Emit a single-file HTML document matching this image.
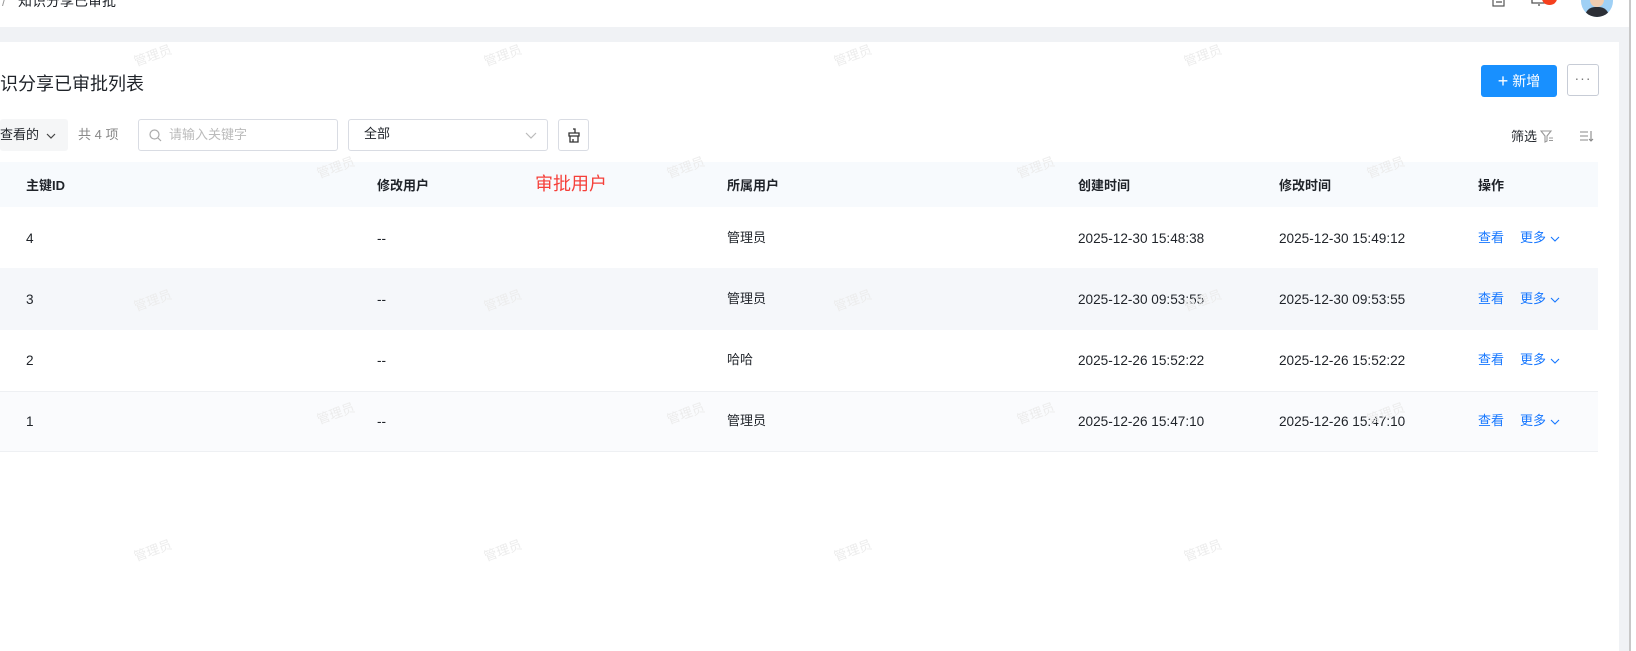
<!DOCTYPE html>
<html><head><meta charset="utf-8"><style>
*{margin:0;padding:0;box-sizing:border-box}
body{width:1636px;height:651px;overflow:hidden;background:#fff;font-family:"Liberation Sans","Noto Sans CJK SC",sans-serif;font-size:13px;color:#1f2329;position:relative}
.a{position:absolute;line-height:20px;white-space:nowrap}
.wm{position:absolute;color:#ececec;font-size:13px;transform:rotate(-20deg);white-space:nowrap}
.th{font-weight:bold;color:#1f2329}
.link{color:#1677ff}
.d{font-size:13.6px}
.chev{display:inline-block;vertical-align:middle;margin-left:4px}
</style></head><body>
<div class="a" style="left:0;top:0;width:1636px;height:27px;background:#fff"></div>
<div class="a" style="left:2px;top:-8px;color:#999;font-size:13px">/</div>
<div class="a" style="left:18px;top:-9px;font-size:14px;color:#1f2329">知识分享已审批</div>
<svg class="a" style="left:1491px;top:-6px" width="16" height="14" viewBox="0 0 16 14"><rect x="2" y="0" width="11" height="12" fill="none" stroke="#555" stroke-width="1.2"/><path d="M5 5h6M5 8h6" stroke="#555" stroke-width="1.2"/></svg>
<svg class="a" style="left:1529px;top:-6px" width="20" height="16" viewBox="0 0 20 16"><path d="M3 0v9h14" fill="none" stroke="#555" stroke-width="1.3"/><path d="M9 11h2" stroke="#555" stroke-width="1.3"/></svg>
<div class="a" style="left:1542px;top:-8px;width:15px;height:13px;border-radius:50%;background:#f5401e"></div>
<div class="a" style="left:1581px;top:-15px;width:32px;height:32px;border-radius:50%;background:#9fd0f5;overflow:hidden"><div style="position:absolute;left:9px;top:4px;width:14px;height:18px;border-radius:7px;background:#f1cdb0"></div><div style="position:absolute;left:4px;top:22px;width:24px;height:14px;border-radius:10px 10px 0 0;background:#2c2f36"></div></div>
<div class="a" style="left:0;top:27px;width:1636px;height:15px;background:#f0f2f5"></div>
<div class="a" style="left:1619px;top:27px;width:11px;height:624px;background:#f0f2f5"></div>
<div class="a" style="left:1629px;top:0;width:2px;height:651px;background:#c8c8c8"></div>
<div class="a" style="left:1631px;top:0;width:5px;height:651px;background:#fff"></div>
<div class="a" style="left:0;top:72px;font-size:18px;line-height:24px;color:#1f2329">识分享已审批列表</div>
<div class="a" style="left:1481px;top:65px;width:76px;height:32px;background:#1890ff;border-radius:3px;color:#fff;font-size:14px;line-height:32px;text-align:center"><span style="font-size:18px;vertical-align:-1px">+</span> 新增</div>
<div class="a" style="left:1567px;top:64px;width:32px;height:32px;border:1px solid #c7ccd6;border-radius:3px;color:#777;text-align:center;line-height:26px;font-size:14px;letter-spacing:1px">···</div>
<div class="a" style="left:0;top:119px;width:68px;height:32px;background:#f5f6f7;border-radius:3px;font-size:13px;line-height:32px">查看的<svg style="position:absolute;left:46px;top:14px" width="10" height="6" viewBox="0 0 10 6"><path d="M1 1l4 4 4-4" fill="none" stroke="#444" stroke-width="1.2"/></svg></div>
<div class="a" style="left:78px;top:125px;color:#888">共 4 项</div>
<div class="a" style="left:138px;top:119px;width:200px;height:32px;border:1px solid #d9dce3;border-radius:3px"><svg style="position:absolute;left:10px;top:9px" width="13" height="13" viewBox="0 0 13 13"><circle cx="5.5" cy="5.5" r="4.5" fill="none" stroke="#aaa" stroke-width="1.2"/><path d="M9 9l3 3" stroke="#aaa" stroke-width="1.2"/></svg><span style="position:absolute;left:30px;top:5px;color:#bbb">请输入关键字</span></div>
<div class="a" style="left:348px;top:119px;width:200px;height:32px;border:1px solid #d9dce3;border-radius:3px"><span style="position:absolute;left:15px;top:4px">全部</span><svg style="position:absolute;right:10px;top:12px" width="12" height="8" viewBox="0 0 12 8"><path d="M1 1l5 5 5-5" fill="none" stroke="#bbb" stroke-width="1.2"/></svg></div>
<div class="a" style="left:558px;top:119px;width:31px;height:32px;border:1px solid #d9dce3;border-radius:3px"><svg style="position:absolute;left:8px;top:8px" width="14" height="15" viewBox="0 0 14 15"><path d="M6 1h2v4M2 5h10v3H2zM3 8v6h8V8M6 14v-3" fill="none" stroke="#333" stroke-width="1.3"/></svg></div>
<div class="a" style="left:1511px;top:127px;font-size:13px">筛选</div>
<svg class="a" style="left:1540px;top:130px" width="14" height="13" viewBox="0 0 14 13"><path d="M1 1h10L7 6v5L5 12V6z" fill="none" stroke="#999" stroke-width="1.1"/><path d="M9 8h4M9 10.5h4" stroke="#999"/></svg>
<svg class="a" style="left:1580px;top:131px" width="14" height="11" viewBox="0 0 14 11"><path d="M0 1h8M0 5h8M0 9h8M11 0v10M9 8l2 2 2-2" fill="none" stroke="#888" stroke-width="1.1"/></svg>
<div class="a" style="left:0;top:162px;width:1598px;height:45px;background:#f7fafd"></div>
<div class="a" style="left:0;top:268px;width:1598px;height:62px;background:#f5f7fa"></div>
<div class="a" style="left:0;top:391px;width:1598px;height:61px;background:#fafbfd;border-top:1px solid #eef0f3;border-bottom:1px solid #eef0f3"></div>
<div class="a th" style="left:26px;top:176px">主键ID</div>
<div class="a th" style="left:377px;top:176px">修改用户</div>
<div class="a" style="left:535px;top:172px;color:#f5403a;font-size:18px;line-height:24px">审批用户</div>
<div class="a th" style="left:727px;top:176px">所属用户</div>
<div class="a th" style="left:1078px;top:176px">创建时间</div>
<div class="a th" style="left:1279px;top:176px">修改时间</div>
<div class="a th" style="left:1478px;top:176px">操作</div>

<div class="a d" style="left:26px;top:229px">4</div><div class="a d" style="left:377px;top:229px">--</div><div class="a" style="left:727px;top:228px">管理员</div><div class="a d" style="left:1078px;top:229px">2025-12-30 15:48:38</div><div class="a d" style="left:1279px;top:229px">2025-12-30 15:49:12</div><div class="a link" style="left:1478px;top:228px">查看</div><div class="a link" style="left:1520px;top:228px">更多<svg class="chev" width="10" height="6" viewBox="0 0 10 6"><path d="M1 1l4 4 4-4" fill="none" stroke="#1677ff" stroke-width="1.1"/></svg></div>
<div class="a d" style="left:26px;top:290px">3</div><div class="a d" style="left:377px;top:290px">--</div><div class="a" style="left:727px;top:289px">管理员</div><div class="a d" style="left:1078px;top:290px">2025-12-30 09:53:55</div><div class="a d" style="left:1279px;top:290px">2025-12-30 09:53:55</div><div class="a link" style="left:1478px;top:289px">查看</div><div class="a link" style="left:1520px;top:289px">更多<svg class="chev" width="10" height="6" viewBox="0 0 10 6"><path d="M1 1l4 4 4-4" fill="none" stroke="#1677ff" stroke-width="1.1"/></svg></div>
<div class="a d" style="left:26px;top:351px">2</div><div class="a d" style="left:377px;top:351px">--</div><div class="a" style="left:727px;top:350px">哈哈</div><div class="a d" style="left:1078px;top:351px">2025-12-26 15:52:22</div><div class="a d" style="left:1279px;top:351px">2025-12-26 15:52:22</div><div class="a link" style="left:1478px;top:350px">查看</div><div class="a link" style="left:1520px;top:350px">更多<svg class="chev" width="10" height="6" viewBox="0 0 10 6"><path d="M1 1l4 4 4-4" fill="none" stroke="#1677ff" stroke-width="1.1"/></svg></div>
<div class="a d" style="left:26px;top:412px">1</div><div class="a d" style="left:377px;top:412px">--</div><div class="a" style="left:727px;top:411px">管理员</div><div class="a d" style="left:1078px;top:412px">2025-12-26 15:47:10</div><div class="a d" style="left:1279px;top:412px">2025-12-26 15:47:10</div><div class="a link" style="left:1478px;top:411px">查看</div><div class="a link" style="left:1520px;top:411px">更多<svg class="chev" width="10" height="6" viewBox="0 0 10 6"><path d="M1 1l4 4 4-4" fill="none" stroke="#1677ff" stroke-width="1.1"/></svg></div>
<div class="wm" style="left:133px;top:45px">管理员</div><div class="wm" style="left:483px;top:45px">管理员</div><div class="wm" style="left:833px;top:45px">管理员</div><div class="wm" style="left:1183px;top:45px">管理员</div>
<div class="wm" style="left:316px;top:157px">管理员</div><div class="wm" style="left:666px;top:157px">管理员</div><div class="wm" style="left:1016px;top:157px">管理员</div><div class="wm" style="left:1366px;top:157px">管理员</div>
<div class="wm" style="left:133px;top:290px">管理员</div><div class="wm" style="left:483px;top:290px">管理员</div><div class="wm" style="left:833px;top:290px">管理员</div><div class="wm" style="left:1183px;top:290px">管理员</div>
<div class="wm" style="left:316px;top:403px">管理员</div><div class="wm" style="left:666px;top:403px">管理员</div><div class="wm" style="left:1016px;top:403px">管理员</div><div class="wm" style="left:1366px;top:403px">管理员</div>
<div class="wm" style="left:133px;top:540px">管理员</div><div class="wm" style="left:483px;top:540px">管理员</div><div class="wm" style="left:833px;top:540px">管理员</div><div class="wm" style="left:1183px;top:540px">管理员</div>
</body></html>
